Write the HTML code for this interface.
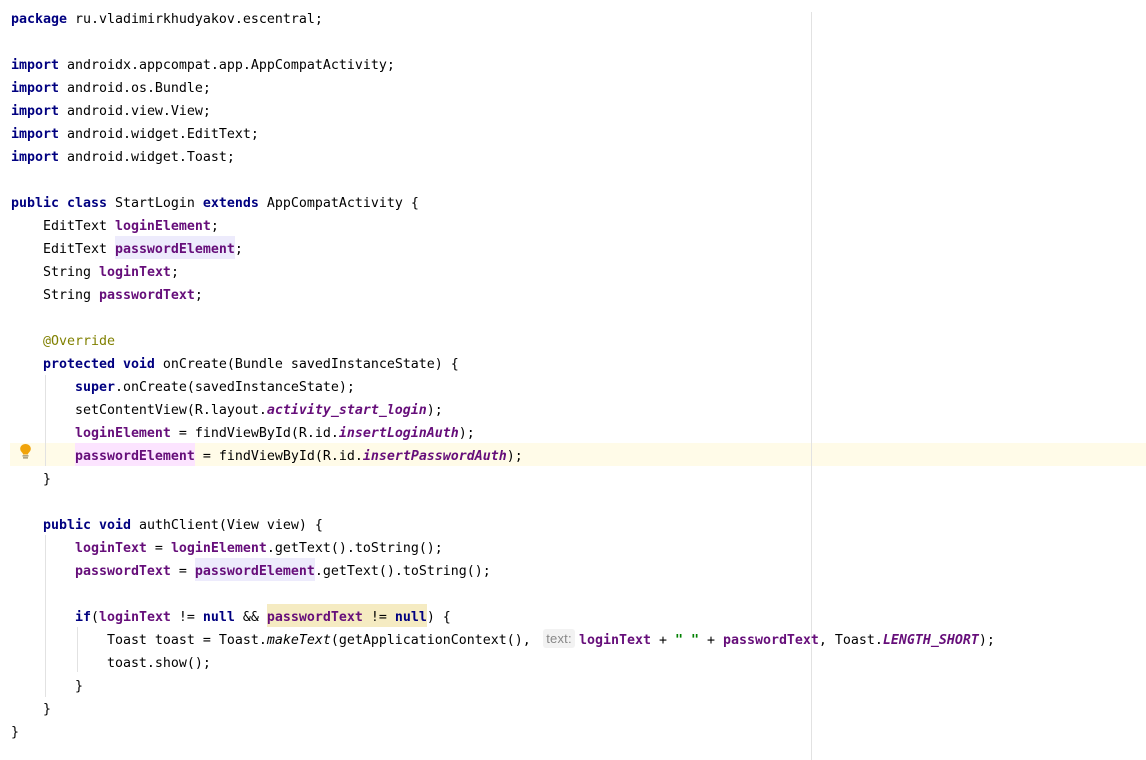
<!DOCTYPE html>
<html>
<head>
<meta charset="utf-8">
<style>
html,body{margin:0;padding:0;background:#fff;}
body{width:1146px;height:760px;overflow:hidden;position:relative;}
#t{position:absolute;left:0;top:2px;width:1146px;height:758px;}
.l{position:absolute;left:11px;height:23px;line-height:23px;white-space:pre;font-family:"DejaVu Sans Mono","Liberation Mono",monospace;font-size:13.29px;color:#000;}
.k{color:#000080;font-weight:bold;}
.f{color:#660E7A;font-weight:bold;}
.fi{color:#660E7A;font-weight:bold;font-style:italic;}
.i{font-style:italic;}
.a{color:#808000;}
.s{color:#008000;font-weight:bold;}
.r{position:absolute;height:23px;}
.g{position:absolute;width:1px;background:#E2E2E2;}
.hint{position:absolute;left:543px;top:629px;width:32px;height:19px;background:#F2F2F2;border-radius:3px;color:#888;font:13px/20px "Liberation Sans",sans-serif;letter-spacing:.2px;text-align:center;}
</style>
</head>
<body>
<div class="r" style="left:10px;top:443px;width:1136px;background:#FFFBE8;"></div>
<div class="r" style="left:115px;top:236px;width:120px;background:#EDEBFC;"></div>
<div class="r" style="left:75px;top:443px;width:120px;background:#FCE4FF;"></div>
<div class="r" style="left:195px;top:558px;width:120px;background:#EDEBFC;"></div>
<div class="r" style="left:267px;top:604px;width:160px;background:#F5EBC2;"></div>
<div class="g" style="left:811px;top:12px;height:748px;"></div>
<div class="g" style="left:45px;top:375px;height:91px;"></div>
<div class="g" style="left:45px;top:535px;height:162px;"></div>
<div class="g" style="left:77px;top:627px;height:45px;"></div>
<svg style="position:absolute;left:18px;top:443px;" width="15" height="17" viewBox="0 0 15 17">
<path d="M7.500 1C4.600 1 2.200 3 2.200 5.800c0 1.800 1 2.900 2 3.900.5.500.8 1 .9 1.800h4.800c.1-.8.400-1.300.9-1.800 1-1 2-2.100 2-3.900C12.800 3 10.400 1 7.500 1z" fill="#F0A30A"/>
<rect x="4.500" y="12.400" width="6" height="1" fill="#7A6A40"/>
<rect x="5" y="14.400" width="5" height="1" fill="#7A6A40"/>
</svg>
<div class="hint">text:</div>
<div id="t">
<div class="l" style="top:6px"><span class="k">package</span> ru.vladimirkhudyakov.escentral;</div>
<div class="l" style="top:52px"><span class="k">import</span> androidx.appcompat.app.AppCompatActivity;</div>
<div class="l" style="top:75px"><span class="k">import</span> android.os.Bundle;</div>
<div class="l" style="top:98px"><span class="k">import</span> android.view.View;</div>
<div class="l" style="top:121px"><span class="k">import</span> android.widget.EditText;</div>
<div class="l" style="top:144px"><span class="k">import</span> android.widget.Toast;</div>
<div class="l" style="top:190px"><span class="k">public class</span> StartLogin <span class="k">extends</span> AppCompatActivity {</div>
<div class="l" style="top:213px">    EditText <span class="f">loginElement</span>;</div>
<div class="l" style="top:236px">    EditText <span class="f">passwordElement</span>;</div>
<div class="l" style="top:259px">    String <span class="f">loginText</span>;</div>
<div class="l" style="top:282px">    String <span class="f">passwordText</span>;</div>
<div class="l" style="top:328px">    <span class="a">@Override</span></div>
<div class="l" style="top:351px">    <span class="k">protected void</span> onCreate(Bundle savedInstanceState) {</div>
<div class="l" style="top:374px">        <span class="k">super</span>.onCreate(savedInstanceState);</div>
<div class="l" style="top:397px">        setContentView(R.layout.<span class="fi">activity_start_login</span>);</div>
<div class="l" style="top:420px">        <span class="f">loginElement</span> = findViewById(R.id.<span class="fi">insertLoginAuth</span>);</div>
<div class="l" style="top:443px">        <span class="f">passwordElement</span> = findViewById(R.id.<span class="fi">insertPasswordAuth</span>);</div>
<div class="l" style="top:466px">    }</div>
<div class="l" style="top:512px">    <span class="k">public void</span> authClient(View view) {</div>
<div class="l" style="top:535px">        <span class="f">loginText</span> = <span class="f">loginElement</span>.getText().toString();</div>
<div class="l" style="top:558px">        <span class="f">passwordText</span> = <span class="f">passwordElement</span>.getText().toString();</div>
<div class="l" style="top:604px">        <span class="k">if</span>(<span class="f">loginText</span> != <span class="k">null</span> &amp;&amp; <span class="f">passwordText</span> != <span class="k">null</span>) {</div>
<div class="l" style="top:627px">            Toast toast = Toast.<span class="i">makeText</span>(getApplicationContext(),</div>
<div class="l" style="top:627px;left:579px"><span class="f">loginText</span> + <span class="s">" "</span> + <span class="f">passwordText</span>, Toast.<span class="fi">LENGTH_SHORT</span>);</div>
<div class="l" style="top:650px">            toast.show();</div>
<div class="l" style="top:673px">        }</div>
<div class="l" style="top:696px">    }</div>
<div class="l" style="top:719px">}</div>
</div>
</body>
</html>
